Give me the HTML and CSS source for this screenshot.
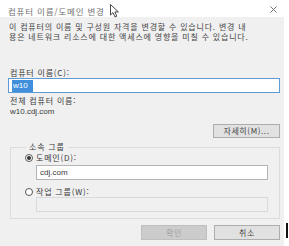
FILE: index.html
```html
<!DOCTYPE html>
<html lang="ko">
<head>
  <meta charset="UTF-8" />
  <title>컴퓨터 이름/도메인 변경</title>
  <link rel="stylesheet" href="styles.css">
</head>
<body>

  <div class="dialog">
    <!-- Title bar -->
    <div class="titlebar">
      <span class="title">컴퓨터 이름/도메인 변경</span>
      <svg class="pointer" width="10" height="14" viewBox="0 0 10 14">
        <path d="M0.5 0.5 L0.5 11 L3 8.6 L5 13 L6.8 12.2 L4.9 7.9 L8.4 7.9 Z" fill="#fff" stroke="#333" stroke-width="0.9"/>
      </svg>
      <svg class="close" width="7" height="7" viewBox="0 0 7 7">
        <path d="M0.5 0.5 L6.5 6.5 M6.5 0.5 L0.5 6.5" stroke="#666" stroke-width="0.9"/>
      </svg>
    </div>

    <div class="content">
      <p class="desc">이 컴퓨터의 이름 및 구성원 자격을 변경할 수 있습니다. 변경 내<br>용은 네트워크 리소스에 대한 액세스에 영향을 미칠 수 있습니다.</p>

      <div class="label first">컴퓨터 이름(C):</div>
      <div class="input focus"><span class="sel">w10</span></div>

      <div class="label">전체 컴퓨터 이름:</div>
      <div class="value">w10.cdj.com</div>

      <div class="more-row">
        <button class="btn">자세히(M)...</button>
      </div>

      <!-- Member of -->
      <fieldset class="group">
        <legend>소속 그룹</legend>
        <div class="radio-row"><span class="radio checked"></span>도메인(D):</div>
        <div class="input sub">cdj.com</div>
        <div class="radio-row second"><span class="radio"></span>작업 그룹(W):</div>
        <div class="input sub disabled"></div>
      </fieldset>

      <div class="actions">
        <button class="btn" disabled>확인</button>
        <button class="btn">취소</button>
      </div>
    </div>
  </div>

  <span class="ibeam"></span>

</body>
</html>
```

FILE: styles.css
```css
body {
  margin: 0;
  background: #fff;
  font-family: "Noto Sans CJK KR", "Liberation Sans", sans-serif;
  font-size: 8px;
  color: #3a3a3a;
  letter-spacing: 0.8px;
}

.dialog {
  width: 284px;
  height: 246px;
  background: #f0f0f0;
}

.titlebar {
  position: relative;
  height: 17px;
  background: #fff;
  display: flex;
  align-items: center;
  padding: 0 7px 0 8px;
}

.title {
  font-size: 8.5px;
  color: #707070;
  line-height: 10px;
  margin-top: 4px;
}

.pointer {
  position: absolute;
  left: 110px;
  top: 4px;
}

.close {
  margin-left: auto;
  margin-top: 2px;
}

.content {
  padding: 5px 4px 0 8px;
}

.desc {
  margin: 0 0 0 1px;
  line-height: 9.5px;
  color: #444;
}

.label {
  line-height: 10px;
  margin: 3px 0 0 2px;
}

.label.first {
  margin-top: 27px;
}

.value {
  line-height: 10px;
  margin: 1px 0 0 2px;
  font-family: "Liberation Sans", sans-serif;
  letter-spacing: 0;
}

.input {
  box-sizing: border-box;
  height: 15px;
  background: #fff;
  border: 1px solid #b9b9b9;
  line-height: 13px;
  padding-left: 3px;
  font-family: "Liberation Sans", sans-serif;
  letter-spacing: 0;
}

.input.focus {
  border-color: #5f9ad6;
  padding-left: 3px;
}

.sel {
  display: inline-block;
  background: #3f8fdd;
  color: #fff;
  line-height: 12px;
  padding: 0 5px 0 1px;
  margin-top: 0.5px;
}

.more-row {
  display: flex;
  justify-content: flex-end;
  margin-top: 7px;
}

.btn {
  box-sizing: border-box;
  width: 67px;
  height: 14px;
  padding: 0;
  background: #e1e1e1;
  border: 1px solid #adadad;
  font-family: inherit;
  font-size: 8px;
  letter-spacing: 0.6px;
  color: #444;
  line-height: 12px;
}

.btn:disabled {
  background: #cccccc;
  border-color: #bfbfbf;
  color: #a3a3a3;
}

.group {
  margin: 4px 0 0 2px;
  padding: 1px 11px 6px 14px;
  border: 1px solid #dcdcdc;
}

.group legend {
  padding: 0 3px;
  margin-left: 1px;
  line-height: 10px;
}

.radio-row {
  display: flex;
  align-items: center;
  gap: 3px;
  line-height: 10px;
}

.radio-row.second {
  margin-top: 7px;
}

.radio {
  box-sizing: border-box;
  width: 8px;
  height: 8px;
  border: 1px solid #555;
  border-radius: 50%;
  background: #fff;
  display: flex;
  align-items: center;
  justify-content: center;
}

.radio.checked::after {
  content: "";
  width: 4px;
  height: 4px;
  border-radius: 50%;
  background: #333;
}

.input.sub {
  margin: 2px 0 0 11px;
  border-color: #b4b4b4;
}

.input.sub.disabled {
  margin-top: 0;
  background: #f0f0f0;
  border-color: #d9d9d9;
}

.actions {
  display: flex;
  justify-content: flex-end;
  gap: 7px;
  margin-top: 6px;
}

.actions .btn {
  height: 15px;
  width: 66px;
}

.ibeam {
  position: absolute;
  left: 286px;
  top: 223px;
  width: 2px;
  height: 15px;
  background: #111;
}
```
